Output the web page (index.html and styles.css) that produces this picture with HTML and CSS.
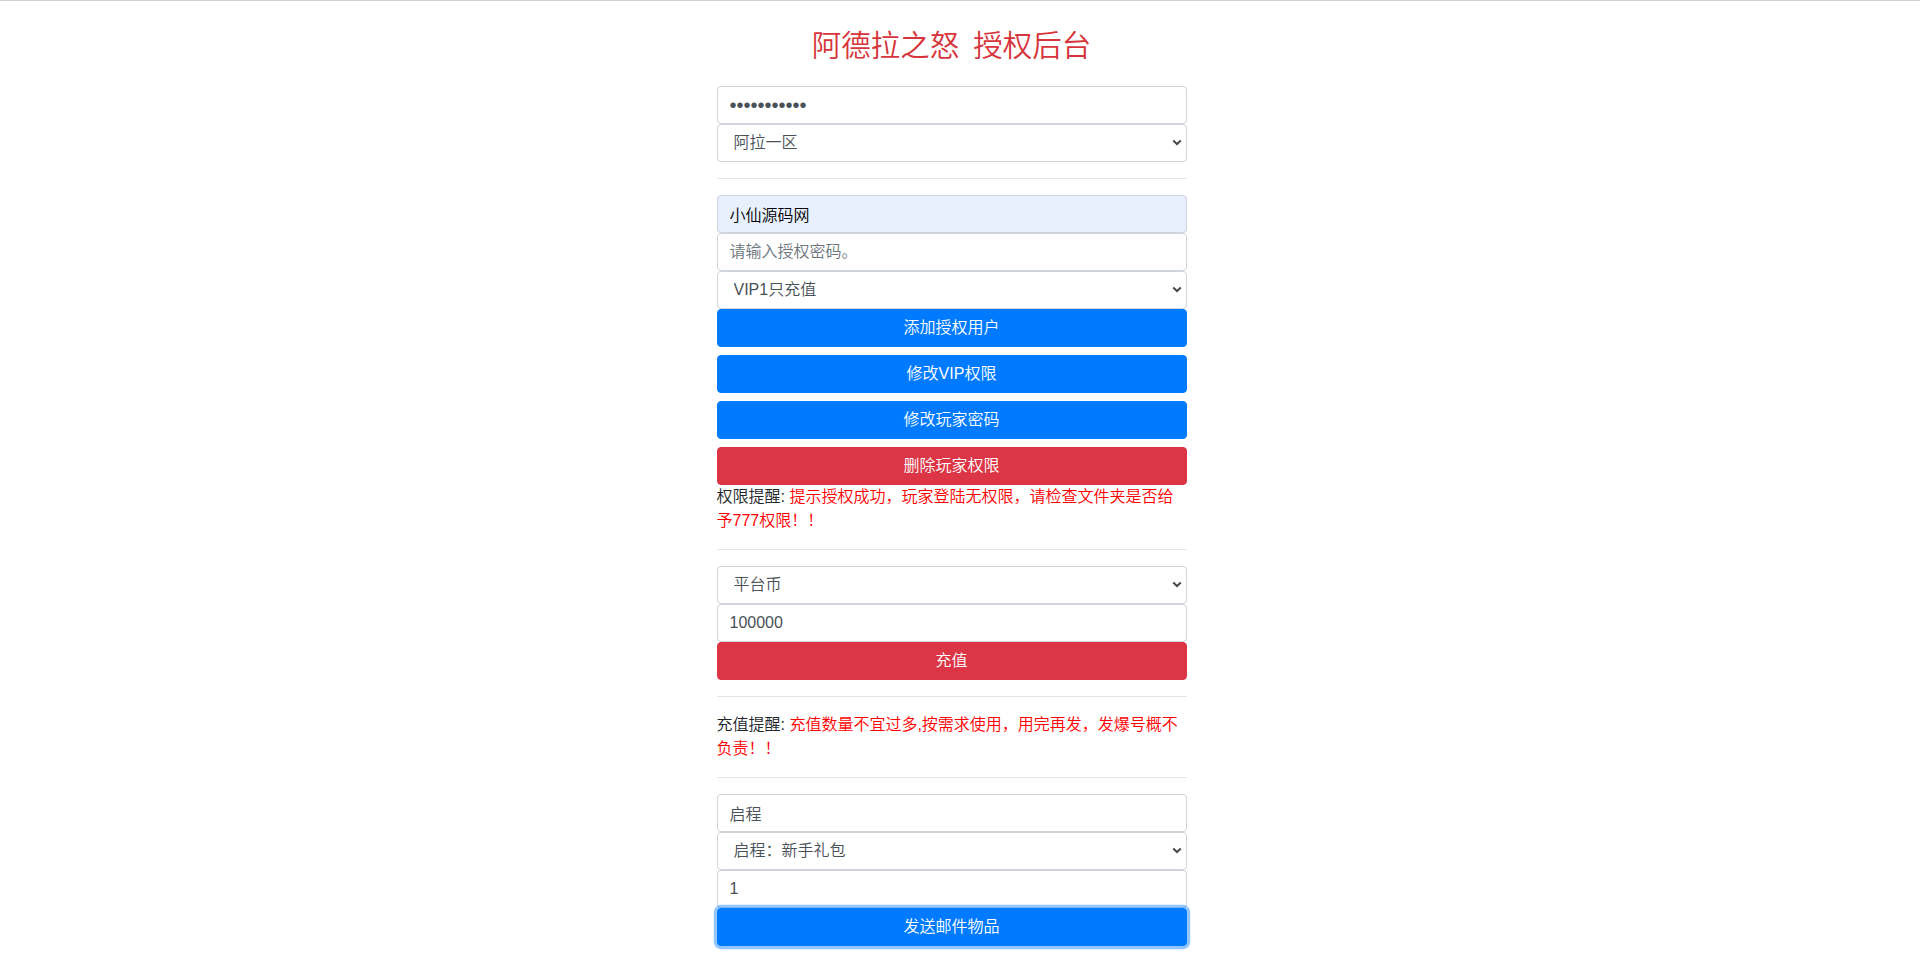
FILE: index.html
```html
<!DOCTYPE html>
<html lang="zh-CN">
<head>
<meta charset="utf-8">
<title>阿德拉之怒 授权后台</title>
<link rel="stylesheet" href="styles.css">
</head>
<body>
<div class="topline"></div>
<div class="page">
  <h3 class="title">阿德拉之怒<span class="gap"></span>授权后台</h3>
  <form class="panel">
    <input type="password" class="field pw" value="12345678901">
    <div class="select-wrap">
      <select class="field select"><option>阿拉一区</option></select>
      <svg class="chev" width="10" height="7" viewBox="0 0 10 7"><path d="M1.2 1.4 L5 5 L8.8 1.4" fill="none" stroke="#4a4a4a" stroke-width="2"/></svg>
    </div>
    <hr class="rule">
    <input type="text" class="field autofill" value="小仙源码网">
    <input type="text" class="field" placeholder="请输入授权密码。">
    <div class="select-wrap">
      <select class="field select"><option>VIP1只充值</option></select>
      <svg class="chev" width="10" height="7" viewBox="0 0 10 7"><path d="M1.2 1.4 L5 5 L8.8 1.4" fill="none" stroke="#4a4a4a" stroke-width="2"/></svg>
    </div>
    <button type="button" class="btn btn-primary">添加授权用户</button>
    <button type="button" class="btn btn-primary">修改VIP权限</button>
    <button type="button" class="btn btn-primary">修改玩家密码</button>
    <button type="button" class="btn btn-danger">删除玩家权限</button>
    <p class="note">权限提醒: <span class="warn">提示授权成功，玩家登陆无权限，请检查文件夹是否给予777权限！！</span></p>
    <hr class="rule">
    <div class="select-wrap">
      <select class="field select"><option>平台币</option></select>
      <svg class="chev" width="10" height="7" viewBox="0 0 10 7"><path d="M1.2 1.4 L5 5 L8.8 1.4" fill="none" stroke="#4a4a4a" stroke-width="2"/></svg>
    </div>
    <input type="text" class="field" value="100000">
    <button type="button" class="btn btn-danger">充值</button>
    <hr class="rule">
    <p class="note">充值提醒: <span class="warn">充值数量不宜过多,按需求使用，用完再发，发爆号概不负责！！</span></p>
    <hr class="rule">
    <input type="text" class="field" value="启程">
    <div class="select-wrap">
      <select class="field select"><option>启程：新手礼包</option></select>
      <svg class="chev" width="10" height="7" viewBox="0 0 10 7"><path d="M1.2 1.4 L5 5 L8.8 1.4" fill="none" stroke="#4a4a4a" stroke-width="2"/></svg>
    </div>
    <input type="text" class="field" value="1">
    <button type="button" class="btn btn-primary btn-focus">发送邮件物品</button>
  </form>
</div>
</body>
</html>
```
FILE: styles.css
```css
* { box-sizing: border-box; }
html, body { margin: 0; padding: 0; background: #fff; }
body {
  font-family: "Segoe UI", "Liberation Sans", "Noto Sans CJK SC", sans-serif;
  font-size: 16px;
  font-weight: 350;
  line-height: 1.5;
  color: #212529;
}
.topline { height: 1px; background: #fff; border-bottom: 1px solid #cfcfcf; }
.page {
  padding-top: 27px;
  padding-right: 17px;
  min-height: 1362px;
}
.title {
  margin: 0 0 23px;
  text-align: center;
  font-size: 29.5px;
  font-weight: 350;
  line-height: 1.2;
  color: #d6353b;
}
.title .gap { display: inline-block; width: 14px; }
.panel {
  width: 470px;
  margin: 0 auto;
}
.field {
  display: block;
  width: 100%;
  height: 38px;
  margin: 0;
  padding: 6px 12px;
  font-family: inherit;
  font-size: 16px;
  font-weight: 350;
  line-height: 24px;
  color: #495057;
  background: #fff;
  border: 1px solid #ced4da;
  border-radius: 4px;
  outline: none;
}
.field::placeholder { color: #6c757d; opacity: 1; }
.pw {
  font-family: "Liberation Sans", sans-serif;
  font-size: 20px;
  font-weight: 400;
  letter-spacing: 0;
  color: #495057;
}
.autofill { background: #e8f0fe; color: #000; }
.select-wrap { position: relative; }
.select {
  -webkit-appearance: none;
  appearance: none;
  padding-left: 16px;
}
.chev {
  position: absolute;
  right: 5px;
  top: 15px;
  pointer-events: none;
}
.rule {
  margin: 16px 0;
  border: 0;
  border-top: 1px solid rgba(0,0,0,.1);
  height: 0;
}
.btn {
  display: block;
  width: 100%;
  height: 38px;
  margin: 0;
  padding: 6px 12px;
  font-family: inherit;
  font-size: 16px;
  font-weight: 350;
  line-height: 24px;
  color: #fff;
  text-align: center;
  border: 1px solid transparent;
  border-radius: 4px;
  cursor: pointer;
}
.btn + .btn { margin-top: 8px; }
.btn-primary { background: #007bff; border-color: #007bff; }
.btn-danger { background: #dc3545; border-color: #dc3545; }
.btn-focus { box-shadow: 0 0 0 3.2px rgba(38,143,255,.5); }
.note {
  margin: 0 0 16px;
  line-height: 24px;
}
.warn { color: #ff0000; }
```
